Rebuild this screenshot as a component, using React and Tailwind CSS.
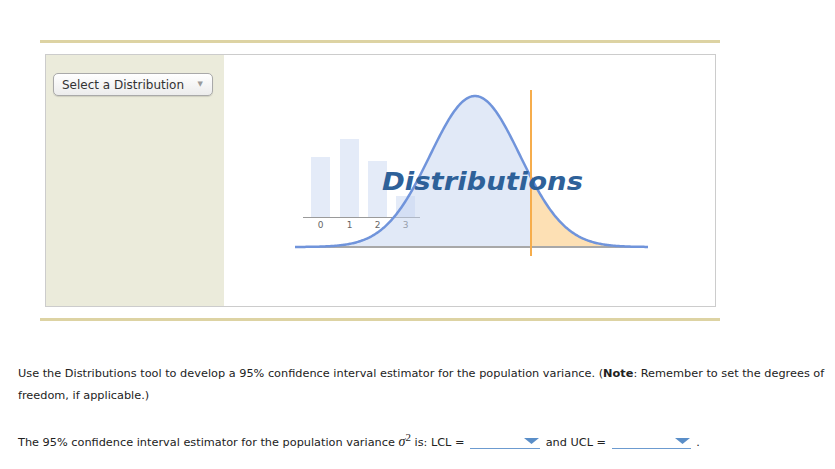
const MU = 475
const SIGMA = 45
const BASE = 247
const PEAK = 151

function curveY(x) {
  return BASE - PEAK * Math.exp(-((x - MU) ** 2) / (2 * SIGMA * SIGMA))
}

function curvePath(x0, x1) {
  let d = ''
  for (let x = x0; x <= x1; x += 1) {
    d += `${d ? 'L' : 'M'}${x} ${curveY(x).toFixed(2)} `
  }
  return d
}

function DistributionsLogo() {
  const full = curvePath(295, 648)
  const left = `${curvePath(295, 531)}L531 ${BASE} L295 ${BASE} Z`
  const right = `${curvePath(531, 648)}L648 ${BASE} L531 ${BASE} Z`
  const bars = [
    { x: 311, top: 157, label: '0' },
    { x: 340, top: 139, label: '1' },
    { x: 368, top: 161, label: '2' },
    { x: 396, top: 196, label: '3' },
  ]
  return (
    <svg width="491" height="251" viewBox="224 55 491 251" className="block">
      {bars.map((b) => (
        <rect key={b.label} x={b.x} y={b.top} width="19" height={217 - b.top} fill="#c3d3ef" fillOpacity="0.45" />
      ))}
      <line x1="303" y1="217.5" x2="420" y2="217.5" stroke="#9a9a9a" strokeWidth="1" />
      {bars.map((b) => (
        <text key={b.label} x={b.x + 9.5} y="228" textAnchor="middle" fontSize="9" fill="#666" fontFamily="'DejaVu Sans', sans-serif">
          {b.label}
        </text>
      ))}
      <path d={left} fill="#c3d3ef" fillOpacity="0.5" />
      <path d={right} fill="#fde0b4" />
      <line x1="295" y1={BASE} x2="648" y2={BASE} stroke="#a8a8a8" strokeWidth="2" />
      <path d={full} fill="none" stroke="#7094db" strokeWidth="2.5" />
      <line x1="531" y1="90" x2="531" y2="256" stroke="#f6ad4c" strokeWidth="2" />
      <text
        x="382"
        y="190"
        fontSize="25"
        fontWeight="bold"
        fontStyle="italic"
        fill="#2e6199"
        textLength="201"
        lengthAdjust="spacingAndGlyphs"
        fontFamily="'DejaVu Sans', Verdana, sans-serif"
      >
        Distributions
      </text>
    </svg>
  )
}

function AnswerDrop({ width }) {
  return (
    <span className={`inline-block align-[-3px] border-b border-[#6c9bd0] h-[14px] mx-[2px] ${width}`}>
      <svg width="15" height="6" viewBox="0 0 15 6" className="float-right mt-[3px] mr-[1px]">
        <path d="M0 0 L15 0 L7.5 6 Z" fill="#5a8ec8" />
      </svg>
    </span>
  )
}

export default function App() {
  return (
    <div className="w-[835px] h-[469px] bg-white font-['DejaVu_Sans',Verdana,sans-serif] text-[#222] overflow-hidden">
      <div className="pt-[40px] pl-[40px]">
        <div className="w-[680px] h-[3px] bg-[#ddd3a3]" />
        <div className="ml-[5px] mt-[11px] w-[671px] h-[253px] border border-[#cccccc] flex">
          <div className="w-[178px] bg-[#ebebdb] pt-[18px] pl-[7px]">
            <div className="w-[160px] h-[23px] rounded-[5px] border border-[#a9a9a9] bg-gradient-to-b from-white to-[#ececec] shadow-[0_1px_1px_rgba(0,0,0,0.12)] flex items-center justify-between pl-[8px] pr-[9px] text-[12px] text-[#333]">
              <span>Select a Distribution</span>
              <span className="text-[7px] text-[#9a9a9a]">▼</span>
            </div>
          </div>
          <div className="flex-1 bg-white">
            <DistributionsLogo />
          </div>
        </div>
        <div className="mt-[11px] w-[680px] h-[3px] bg-[#ddd3a3]" />
      </div>
      <div className="pl-[18px] pr-[4px] pt-[42px] text-[11.3px] leading-[22px]">
        <p>
          Use the Distributions tool to develop a 95% confidence interval estimator for the population variance. (<b>Note</b>: Remember to set the degrees of freedom, if applicable.)
        </p>
        <p className="mt-[24px]">
          The 95% confidence interval estimator for the population variance{' '}
          <span className="font-['Liberation_Serif',serif] italic text-[14px]">σ</span>
          <sup className="font-['Liberation_Serif',serif] text-[11px]">2</sup> is: LCL ={' '}
          <AnswerDrop width="w-[70px]" /> and UCL ={' '}
          <AnswerDrop width="w-[79px]" /> .
        </p>
      </div>
    </div>
  )
}
